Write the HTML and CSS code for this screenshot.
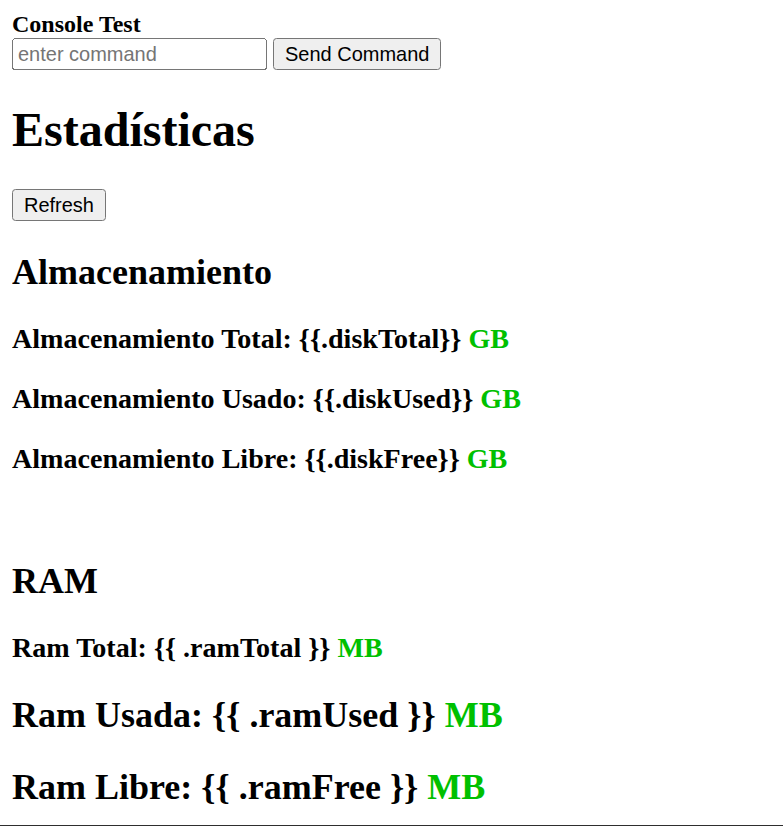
FILE: index.html
```html
<!DOCTYPE html>
<html lang="es">
<head>
<meta charset="utf-8">
<title>Estadísticas</title>
<link rel="stylesheet" href="styles.css">
</head>
<body class="page">
<b class="console-title">Console Test</b><br>
<input class="cmd-input" type="text" placeholder="enter command"> <button class="btn">Send Command</button>
<h1 class="title">Estadísticas</h1>
<button class="btn">Refresh</button>
<h2 class="section">Almacenamiento</h2>
<h3 class="stat">Almacenamiento Total: {{.diskTotal}} <span class="unit">GB</span></h3>
<h3 class="stat">Almacenamiento Usado: {{.diskUsed}} <span class="unit">GB</span></h3>
<h3 class="stat">Almacenamiento Libre: {{.diskFree}} <span class="unit">GB</span></h3>
<br>
<h2 class="section">RAM</h2>
<h3 class="stat">Ram Total: {{ .ramTotal }} <span class="unit">MB</span></h3>
<h2 class="stat-big">Ram Usada: {{ .ramUsed }} <span class="unit">MB</span></h2>
<h2 class="stat-big">Ram Libre: {{ .ramFree }} <span class="unit">MB</span></h2>
<div class="frame-edge"></div>
</body>
</html>
```
FILE: styles.css
```css
html {
  zoom: 1.5;
}
.page {
  margin: 7.34px 8px 8px;
  font-family: "Liberation Serif", "Times New Roman", serif;
  font-size: 16px;
  color: #000;
  background: #fff;
}
.cmd-input,
.btn {
  font-family: "Liberation Sans", Arial, sans-serif;
  font-size: 13.333px;
}
.cmd-input {
  box-sizing: border-box;
  width: 170px;
}
.cmd-input::placeholder {
  color: #757575;
}
.unit {
  color: #00c000;
}
.frame-edge {
  position: fixed;
  left: 0;
  right: 0;
  bottom: 0;
  height: 0.667px;
  background: #2e2e2e;
}
```
